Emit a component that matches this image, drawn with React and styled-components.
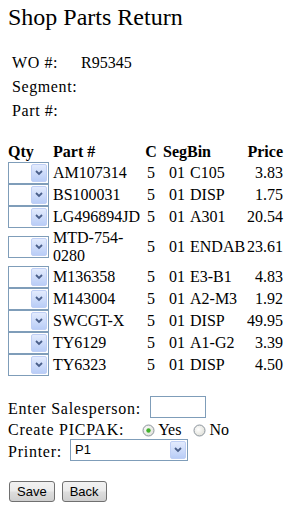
import React from "react";
import styled, { createGlobalStyle } from "styled-components";

const parts = [
  { part: "AM107314", c: "5", seg: "01", bin: "C105", price: "3.83" },
  { part: "BS100031", c: "5", seg: "01", bin: "DISP", price: "1.75" },
  { part: "LG496894JD", c: "5", seg: "01", bin: "A301", price: "20.54" },
  { part: "MTD-754-0280", c: "5", seg: "01", bin: "ENDAB", price: "23.61" },
  { part: "M136358", c: "5", seg: "01", bin: "E3-B1", price: "4.83" },
  { part: "M143004", c: "5", seg: "01", bin: "A2-M3", price: "1.92" },
  { part: "SWCGT-X", c: "5", seg: "01", bin: "DISP", price: "49.95" },
  { part: "TY6129", c: "5", seg: "01", bin: "A1-G2", price: "3.39" },
  { part: "TY6323", c: "5", seg: "01", bin: "DISP", price: "4.50" },
];

const GlobalStyle = createGlobalStyle`
  html, body {
    margin: 0;
    padding: 0;
    background: #fff;
  }
  body {
    font-family: "Liberation Serif", "Times New Roman", serif;
    font-size: 16px;
    line-height: 18px;
    color: #000;
  }
`;

const Page = styled.div`
  padding: 3px 0 0 8px;
  width: 289px;
  box-sizing: border-box;
`;

const Title = styled.h2`
  margin: 0;
  font-size: 24px;
  line-height: 28px;
  font-weight: normal;
`;

const InfoGrid = styled.div`
  display: grid;
  grid-template-columns: 69px auto;
  row-gap: 6px;
  margin-top: 23px;
  padding-left: 4px;
`;

const InfoLabel = styled.span`
  letter-spacing: 0.6px;
`;

const PartsTable = styled.div`
  margin-top: 22px;
  width: 275px;
`;

const Row = styled.div`
  display: grid;
  grid-template-columns: 41px 94px 16px 28px 58px 38px;
  align-items: center;
  min-height: ${(p) => (p.$head ? 20 : 22)}px;
  font-weight: ${(p) => (p.$head ? "bold" : "normal")};
`;

const Cell = styled.div`
  padding: 1px 0;
  padding-left: ${(p) => p.$pl || 0}px;
  padding-right: ${(p) => p.$pr || 0}px;
  text-align: ${(p) => p.$align || "left"};
  white-space: ${(p) => (p.$wrap ? "normal" : "nowrap")};
`;

const SelectBox = styled.div`
  width: ${(p) => p.$w}px;
  height: 22px;
  box-sizing: border-box;
  border: 1px solid #7f9db9;
  background: #fff;
  padding: 1px;
  display: flex;
  align-items: stretch;
  justify-content: space-between;
  font-family: "Liberation Sans", Arial, sans-serif;
  font-size: 13px;
`;

const SelectValue = styled.span`
  padding-left: 3px;
  line-height: 18px;
`;

const ArrowButton = styled.span`
  width: 16px;
  box-sizing: border-box;
  border: 1px solid #bfcff5;
  border-radius: 2px;
  background: linear-gradient(#e3ebfd, #b9cdf7);
  display: flex;
  align-items: center;
  justify-content: center;
`;

const FormArea = styled.div`
  margin-top: 20px;
`;

const FormRow = styled.div`
  display: flex;
  align-items: flex-end;
  height: ${(p) => p.$h}px;
`;

const Label = styled.span`
  letter-spacing: 0.75px;
  margin-right: ${(p) => p.$mr || 0}px;
`;

const TextBox = styled.div`
  width: 56px;
  height: 22px;
  box-sizing: border-box;
  border: 1px solid #7f9db9;
  background: #fff;
`;

const RadioOption = styled.label`
  display: flex;
  align-items: flex-end;
  margin-left: ${(p) => p.$ml}px;
`;

const RadioMark = styled.svg`
  width: 13px;
  height: 13px;
  margin: 0 3px 2px 0;
`;

const ButtonRow = styled.div`
  display: flex;
  gap: 7px;
  margin-top: 20px;
  padding-left: 1px;
`;

const Button = styled.button`
  height: 21px;
  padding: 0 7px;
  border: 1px solid #707070;
  border-radius: 3px;
  background: linear-gradient(#f2f2f2 0%, #ebebeb 45%, #dddddd 55%, #cfcfcf 100%);
  font-family: "Liberation Sans", Arial, sans-serif;
  font-size: 13px;
  color: #000;
  line-height: 17px;
`;

const Chevron = () => (
  <svg width="8" height="6" viewBox="0 0 8 6">
    <path d="M1 1 L4 4 L7 1" fill="none" stroke="#4a5f8a" strokeWidth="1.8" />
  </svg>
);

const Select = ({ width, value }) => (
  <SelectBox $w={width}>
    <SelectValue>{value}</SelectValue>
    <ArrowButton>
      <Chevron />
    </ArrowButton>
  </SelectBox>
);

const Radio = ({ checked }) => (
  <RadioMark viewBox="0 0 13 13">
    <defs>
      <radialGradient id="rg" cx="0.4" cy="0.4" r="0.7">
        <stop offset="0" stopColor="#ffffff" />
        <stop offset="1" stopColor="#dcdcd4" />
      </radialGradient>
    </defs>
    <circle cx="6.5" cy="6.5" r="5.5" fill="url(#rg)" stroke="#8c959e" />
    {checked && <circle cx="6.5" cy="6.5" r="2.2" fill="#42b12c" />}
  </RadioMark>
);

export default function App() {
  return (
    <Page>
      <GlobalStyle />
      <Title>Shop Parts Return</Title>
      <InfoGrid>
        <InfoLabel>WO #:</InfoLabel>
        <span>R95345</span>
        <InfoLabel>Segment:</InfoLabel>
        <span />
        <InfoLabel>Part #:</InfoLabel>
        <span />
      </InfoGrid>

      <PartsTable>
        <Row $head>
          <Cell>Qty</Cell>
          <Cell $pl={4}>Part #</Cell>
          <Cell $align="center">C</Cell>
          <Cell $pl={4}>Seg</Cell>
          <Cell>Bin</Cell>
          <Cell $align="right">Price</Cell>
        </Row>
        {parts.map((p) => (
          <Row key={p.part}>
            <Select width={41} value="" />
            <Cell $pl={4} $wrap>
              {p.part}
            </Cell>
            <Cell $align="center">{p.c}</Cell>
            <Cell $align="right" $pr={2}>
              {p.seg}
            </Cell>
            <Cell $pl={3}>{p.bin}</Cell>
            <Cell $align="right">{p.price}</Cell>
          </Row>
        ))}
      </PartsTable>

      <FormArea>
        <FormRow $h={22}>
          <Label $mr={9}>Enter Salesperson:</Label>
          <TextBox />
        </FormRow>
        <FormRow $h={21}>
          <Label>Create PICPAK:</Label>
          <RadioOption $ml={18}>
            <Radio checked />
            Yes
          </RadioOption>
          <RadioOption $ml={12}>
            <Radio />
            No
          </RadioOption>
        </FormRow>
        <FormRow $h={22}>
          <Label $mr={8}>Printer:</Label>
          <Select width={118} value="P1" />
        </FormRow>
      </FormArea>

      <ButtonRow>
        <Button>Save</Button>
        <Button>Back</Button>
      </ButtonRow>
    </Page>
  );
}
